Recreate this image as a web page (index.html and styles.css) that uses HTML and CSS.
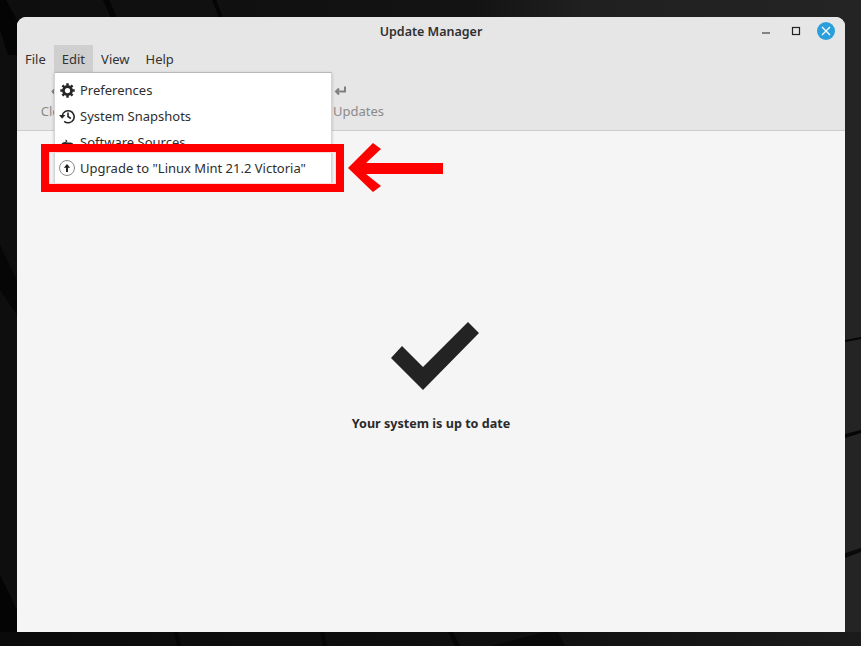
FILE: index.html
```html
<!DOCTYPE html>
<html lang="en">
<head>
<meta charset="utf-8">
<title>Update Manager</title>
<link rel="stylesheet" href="styles.css">
</head>
<body>
<svg class="wallpaper" viewBox="0 0 861 646" aria-hidden="true">
  <defs>
    <linearGradient id="wall" x1="0" y1="0" x2="1" y2="0">
      <stop offset="0" stop-color="#0e0e0e"/>
      <stop offset=".55" stop-color="#131313"/>
      <stop offset=".68" stop-color="#202020"/>
      <stop offset="1" stop-color="#242424"/>
    </linearGradient>
    <linearGradient id="floor" x1="0" y1="0" x2="1" y2="0">
      <stop offset="0" stop-color="#0a0a0a"/>
      <stop offset=".6" stop-color="#0f0f0f"/>
      <stop offset="1" stop-color="#1b1b1b"/>
    </linearGradient>
  </defs>
  <rect width="861" height="646" fill="url(#wall)"/>
  <path d="M0 0H6L17 20V55H8L0 30Z" fill="#040404"/>
  <path d="M0 245L17 280V315L0 290Z" fill="#060606"/>
  <path d="M0 575L17 610V646H0Z" fill="#040404"/>
  <path d="M103 0H109L118 20H112Z" fill="#050505"/>
  <path d="M212 0H216L224 20H220Z" fill="#050505"/>
  <path d="M0 632H861V646H0Z" fill="url(#floor)"/>
  <path d="M174 632H178L181 646H177Z" fill="#050505"/>
  <path d="M320 632H324L327 646H323Z" fill="#060606"/>
  <path d="M448 632H453L460 646H455Z" fill="#050505"/>
  <path d="M490 646L545 632H558L565 646Z" fill="#080808"/>
  <path d="M845 340L861 337V339L845 342Z" fill="#060606"/>
  <path d="M845 434L861 430V433L845 438Z" fill="#060606"/>
  <path d="M845 553L861 548V552L845 558Z" fill="#0a0a0a"/>
</svg>
<main class="window">
  <header class="titlebar">
    <span class="title">Update Manager</span>
    <div class="controls">
      <svg class="ctl" viewBox="0 0 16 16"><path d="M4 10H12" stroke="#222" stroke-width="1.2"/></svg>
      <svg class="ctl" viewBox="0 0 16 16"><rect x="4.500" y="4.500" width="7" height="7" fill="none" stroke="#222" stroke-width="1.200"/></svg>
      <span class="close"><svg viewBox="0 0 18 18"><path d="M5 5L13 13M13 5L5 13" stroke="#fff" stroke-width="1.300"/></svg></span>
    </div>
  </header>
  <nav class="menubar">
    <span class="menu">File</span>
    <span class="menu active">Edit</span>
    <span class="menu">View</span>
    <span class="menu">Help</span>
  </nav>
  <section class="toolbar">
    <div class="tool tool-left">
      <svg class="tool-svg" viewBox="0 0 14 14"><path d="M5.500 4.500L2.500 7.500L5.500 10.500" fill="none" stroke="#808080" stroke-width="1.800"/></svg>
      <span>Clear</span>
    </div>
    <div class="tool tool-right">
      <svg class="tool-svg" viewBox="0 0 14 14"><path d="M12 2.500V7.500H3.500M6 4.500L3 7.500L6 10.500" fill="none" stroke="#808080" stroke-width="2"/></svg>
      <span>Updates</span>
    </div>
  </section>
  <section class="content">
    <svg class="check" viewBox="0 0 88 68"><path d="M0 36L11 24L32 45L77 0L88 11L32 68Z" fill="#232323"/></svg>
    <p class="status">Your system is up to date</p>
  </section>
</main>
<div class="dropdown">
  <div class="item">
    <svg class="item-icon" viewBox="0 0 16 16"><circle cx="8" cy="8" r="4.300" fill="none" stroke="#262626" stroke-width="3"/><path stroke="#262626" stroke-width="2.600" d="M8 .3V3M8 13V15.700M.3 8H3M13 8H15.700M2.600 2.600L4.500 4.500M11.500 11.500L13.400 13.400M13.400 2.600L11.500 4.500M4.500 11.500L2.600 13.400"/></svg>
    <span>Preferences</span>
  </div>
  <div class="item">
    <svg class="item-icon wide" viewBox="0 0 16 16"><path fill="none" stroke="#262626" stroke-width="1.600" d="M3.200 8A6 6 0 1 1 5.200 13.300M9 4.500V8.500L11.800 10.500"/><path fill="#262626" d="M0 7H6.400L3.200 10.800Z"/></svg>
    <span>System Snapshots</span>
  </div>
  <div class="item">
    <svg class="item-icon" viewBox="0 0 16 16"><path fill="#262626" d="M1 12C1 9 3 7.500 6 7.500V4.500L8 6.500L6.500 8L11 8C13 8 15 9.500 15 12V14H1Z"/></svg>
    <span>Software Sources</span>
  </div>
  <div class="item">
    <span class="upgrade-icon"><svg viewBox="0 0 14 14"><path fill="#222" d="M7 3L10.200 6.800H8V11H6V6.800H3.800Z"/></svg></span>
    <span>Upgrade to "Linux Mint 21.2 Victoria"</span>
  </div>
</div>
<div class="highlight"></div>
<svg class="arrow" viewBox="0 0 96 52"><path d="M0 26L25 1L33 7L18 21H95V32H18L33 44L25 50Z" fill="#fe0000"/></svg>
</body>
</html>
```
FILE: styles.css
```css
* { box-sizing: border-box; }
html, body { margin: 0; width: 861px; height: 646px; overflow: hidden; }
body { font-family: "Noto Sans", sans-serif; font-size: 13px; color: #2e2e2e; position: relative; background: #111; }
.wallpaper { position: absolute; inset: 0; width: 861px; height: 646px; }
.window { position: absolute; left: 17px; top: 17px; width: 828px; height: 615px; border-radius: 9px 9px 0 0; background: #f5f5f5; overflow: hidden; display: flex; flex-direction: column; }
.titlebar { height: 28px; flex: none; background: #e6e6e6; display: flex; align-items: center; justify-content: center; position: relative; }
.title { font-weight: 600; font-size: 12.5px; color: #303030; }
.controls { position: absolute; right: 10px; top: 5px; display: flex; align-items: center; gap: 14px; }
.ctl { width: 16px; height: 16px; }
.close { width: 18px; height: 18px; border-radius: 50%; background: #2a9fdc; display: block; margin-left: -1px; }
.close svg { display: block; width: 18px; height: 18px; }
.menubar { height: 28px; flex: none; background: #e6e6e6; display: flex; }
.menu { padding: 0 8px; line-height: 28px; font-size: 13px; color: #333; }
.menu.active { background: #cfcfcf; }
.toolbar { height: 58px; flex: none; background: #e6e6e6; border-bottom: 1px solid #cdcdcd; display: flex; color: #8a8a8a; font-size: 13px; }
.tool { display: flex; flex-direction: column; align-items: center; padding-top: 11px; gap: 4px; line-height: 18px; }
.tool-left { margin-left: 23px; width: 33px; }
.tool-right { margin-left: 260px; align-items: flex-start; }
.tool-svg { width: 14px; height: 14px; flex: none; }
.content { flex: 1; display: flex; flex-direction: column; align-items: center; padding-top: 191px; }
.check { width: 88px; height: 68px; margin-left: 7px; }
.status { margin: 25px 0 0; font-weight: 700; font-size: 12.6px; color: #2a2a2a; }
.dropdown { position: absolute; left: 54px; top: 72px; width: 278px; height: 113px; background: #fff; border: 1px solid #d4d4d4; border-top-color: #b8b8b8; box-shadow: 0 1px 3px rgba(0,0,0,.2); display: flex; flex-direction: column; padding-top: 4px; }
.item { height: 26px; display: flex; align-items: center; gap: 5px; padding-left: 5px; font-size: 13px; color: #2e2e2e; white-space: nowrap; }
.item-icon { width: 15px; height: 15px; flex: none; }
.item-icon.wide { width: 16px; height: 16px; margin: 0 0 0 -1px; }
.upgrade-icon { width: 16px; height: 16px; border: 1px solid #8c8c8c; border-radius: 50%; flex: none; margin-left: -1px; display: block; }
.upgrade-icon svg { display: block; width: 14px; height: 14px; }
.highlight { position: absolute; left: 41px; top: 144px; width: 303px; height: 48px; border: 8px solid #fe0000; box-shadow: inset 0 0 0 1px #f8dcdc; }
.arrow { position: absolute; left: 348px; top: 142px; width: 96px; height: 52px; }
```
